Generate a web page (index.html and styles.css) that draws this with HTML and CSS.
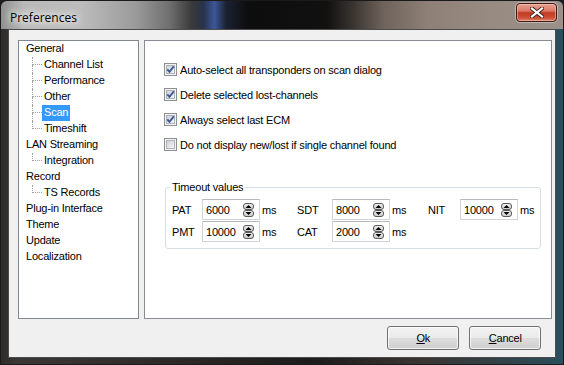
FILE: index.html
```html
<!DOCTYPE html>
<html lang="en">
<head>
<meta charset="UTF-8" />
<title>Preferences</title>
<link rel="stylesheet" href="styles.css">
</head>
<body>
  <svg class="defs" width="0" height="0" aria-hidden="true">
    <defs>
      <linearGradient id="box-fill" x1="0" y1="0" x2="1" y2="1">
        <stop offset="0" stop-color="#cbcfd5"/>
        <stop offset="1" stop-color="#f7f7f8"/>
      </linearGradient>
      <linearGradient id="spin-fill" x1="0" y1="0" x2="0" y2="1">
        <stop offset="0" stop-color="#f4f4f4"/>
        <stop offset="1" stop-color="#c8c8c8"/>
      </linearGradient>
      <symbol id="box" viewBox="0 0 13 13">
        <rect x="0.5" y="0.5" width="12" height="12" fill="#f4f4f4" stroke="#8e8f8f"/>
        <rect x="2.5" y="2.5" width="8" height="8" fill="url(#box-fill)" stroke="#aeb3b9"/>
      </symbol>
      <symbol id="tick" viewBox="0 0 13 13">
        <path d="M3.3 6.3 L5.5 8.8 L9.8 3.4" fill="none" stroke="#3a5a94" stroke-width="1.9"/>
      </symbol>
      <symbol id="spin" viewBox="0 0 11 14">
        <rect x="0.5" y="0.5" width="10" height="6" rx="2.5" fill="url(#spin-fill)" stroke="#5a5a5a"/>
        <rect x="0.5" y="7.5" width="10" height="6" rx="2.5" fill="url(#spin-fill)" stroke="#5a5a5a"/>
        <path d="M5.5 2 L8.5 5 H2.5Z" fill="#000"/>
        <path d="M5.5 12 L8.5 9 H2.5Z" fill="#000"/>
      </symbol>
    </defs>
  </svg>

  <div class="window" role="dialog" aria-label="Preferences">

    <div class="titlebar">
      <span class="title">Preferences</span>
      <button class="close" aria-label="Close">
        <svg width="14" height="11" viewBox="0 0 14 11">
          <path d="M2 1.5 L12 9.5 M12 1.5 L2 9.5" stroke="#3b2420" stroke-width="4" stroke-linecap="square"/>
          <path d="M2 1.5 L12 9.5 M12 1.5 L2 9.5" stroke="#fff" stroke-width="2.2" stroke-linecap="square"/>
        </svg>
      </button>
    </div>

    <div class="frame">
      <div class="client">
        <div class="panes">

          <ul class="tree">
            <li><span class="node">General</span>
              <ul class="sub">
                <li><span class="node">Channel List</span></li>
                <li><span class="node">Performance</span></li>
                <li><span class="node">Other</span></li>
                <li><span class="node selected">Scan</span></li>
                <li><span class="node">Timeshift</span></li>
              </ul>
            </li>
            <li><span class="node">LAN Streaming</span>
              <ul class="sub">
                <li><span class="node">Integration</span></li>
              </ul>
            </li>
            <li><span class="node">Record</span>
              <ul class="sub">
                <li><span class="node">TS Records</span></li>
              </ul>
            </li>
            <li><span class="node">Plug-in Interface</span></li>
            <li><span class="node">Theme</span></li>
            <li><span class="node">Update</span></li>
            <li><span class="node">Localization</span></li>
          </ul>

          <div class="page">
            <label class="check">
              <svg class="box"><use href="#box"/><use href="#tick"/></svg>
              Auto-select all transponders on scan dialog
            </label>
            <label class="check">
              <svg class="box"><use href="#box"/><use href="#tick"/></svg>
              Delete selected lost-channels
            </label>
            <label class="check">
              <svg class="box"><use href="#box"/><use href="#tick"/></svg>
              Always select last ECM
            </label>
            <label class="check">
              <svg class="box"><use href="#box"/></svg>
              Do not display new/lost if single channel found
            </label>

            <fieldset class="group">
              <legend>Timeout values</legend>
              <div class="timeouts">
                <span class="lbl">PAT</span>
                <span class="spin-edit"><span>6000</span><svg class="spin"><use href="#spin"/></svg></span>
                <span class="unit">ms</span>
                <span class="lbl">SDT</span>
                <span class="spin-edit"><span>8000</span><svg class="spin"><use href="#spin"/></svg></span>
                <span class="unit">ms</span>
                <span class="lbl">NIT</span>
                <span class="spin-edit"><span>10000</span><svg class="spin"><use href="#spin"/></svg></span>
                <span class="unit">ms</span>

                <span class="lbl">PMT</span>
                <span class="spin-edit"><span>10000</span><svg class="spin"><use href="#spin"/></svg></span>
                <span class="unit">ms</span>
                <span class="lbl">CAT</span>
                <span class="spin-edit"><span>2000</span><svg class="spin"><use href="#spin"/></svg></span>
                <span class="unit">ms</span>
              </div>
            </fieldset>
          </div>

        </div>

        <div class="buttons">
          <button class="btn"><u>O</u>k</button>
          <button class="btn"><u>C</u>ancel</button>
        </div>
      </div>
    </div>

  </div>
</body>
</html>
```

FILE: styles.css
```css
/* Reset & base */
*, *::before, *::after {
  box-sizing: border-box;
}
html, body {
  margin: 0;
  width: 564px;
  height: 365px;
  overflow: hidden;
  background: #1c1c1c;
  font-family: 'Liberation Sans', Arial, sans-serif;
  font-size: 11px;
  letter-spacing: -0.2px;
  color: #000;
}
.defs {
  position: absolute;
}

/* Aero window frame */
.window {
  width: 564px;
  height: 365px;
  display: flex;
  flex-direction: column;
  border: 1px solid #1a1a1a;
  border-radius: 6px 6px 0 0;
  background: linear-gradient(to right, #2e2c2a 0, #3a3836 3%, #2a2826 35%, #1c1c1c 55%, #3a3532 75%, #2d4a55 97%, #27505f 100%);
}

.titlebar {
  height: 28px;
  flex-shrink: 0;
  display: flex;
  align-items: flex-start;
  justify-content: space-between;
  padding-left: 9px;
  background: linear-gradient(to right,
    #8f8f8f 0, #b9b9b9 4%, #bdbdbd 14%, #9a9a9a 24%, #6f6f6f 30%,
    #393939 34%, #27324a 36%, #3c5699 38%, #1b2233 40%, #0d0d0d 44%,
    #111 58%, #3d3733 63%, #6e635b 68%, #8e8077 76%, #978a81 86%, #9b918a 100%);
  border-radius: 6px 6px 0 0;
}
.title {
  margin-top: 8px;
  font-family: 'Open Sans', 'Noto Sans', sans-serif;
  font-size: 12px;
  letter-spacing: 0;
  color: #000;
  text-shadow: 0 0 6px #fff, 0 0 10px rgba(255, 255, 255, 0.9), 0 0 14px rgba(255, 255, 255, 0.7);
}
.close {
  width: 41px;
  height: 19px;
  margin: 2px 6px 0 0;
  padding: 0;
  display: flex;
  align-items: center;
  justify-content: center;
  border: 1px solid #3e1a14;
  border-radius: 4px;
  background: linear-gradient(#e9a090 0%, #dc7c68 40%, #c23a22 52%, #cc4f36 80%, #e2826a 100%);
  box-shadow: inset 0 0 0 1px rgba(255, 210, 200, 0.5), 0 0 0 1px rgba(255, 255, 255, 0.35);
}

.frame {
  flex-grow: 1;
  display: flex;
  padding: 0 7px 6px 7px;
}

.client {
  flex-grow: 1;
  display: flex;
  flex-direction: column;
  padding: 10px 3px 0 9px;
  background: #f0f0f0;
  border: 1px solid #4b4b4b;
}

.panes {
  height: 279px;
  display: flex;
  gap: 5px;
}

/* Tree view */
.tree {
  width: 121px;
  margin: 0;
  padding: 0;
  list-style: none;
  background: #fff;
  border: 1px solid #828790;
  line-height: 15px;
}
.tree ul {
  margin: 0;
  padding: 0;
  list-style: none;
}
.tree li {
  height: auto;
}
.tree > li > .node {
  margin-left: 5px;
  padding: 0 2px;
}
.sub > li {
  position: relative;
}
.sub > li > .node {
  margin-left: 23px;
  padding: 0 2px;
}
.sub > li::before {
  content: '';
  position: absolute;
  left: 13px;
  top: 0;
  width: 10px;
  height: 8px;
  border-left: 1px dotted #a0a0a0;
  border-bottom: 1px dotted #a0a0a0;
}
.sub > li:not(:last-child)::after {
  content: '';
  position: absolute;
  left: 13px;
  top: 8px;
  height: 8px;
  border-left: 1px dotted #a0a0a0;
}
.node {
  display: inline-block;
  height: 16px;
  vertical-align: top;
}
.node.selected {
  background: #3399ff;
  color: #fff;
}

/* Property page */
.page {
  flex-grow: 1;
  background: #fff;
  border: 1px solid #898c95;
  padding: 16px 10px 0 19px;
}
.check {
  display: flex;
  align-items: center;
  height: 25px;
}
.box {
  width: 13px;
  height: 13px;
  margin-right: 3px;
  flex-shrink: 0;
}

.group {
  margin: 24px 0 0 1px;
  padding: 5px 6px 6px 6px;
  border: 1px solid #d5dfe5;
  border-radius: 3px;
}
.group legend {
  margin-left: -2px;
  padding: 0 2px;
  line-height: 13px;
}
.timeouts {
  display: grid;
  grid-template-columns: 30px 58px 37px 35px 58px 38px 32px 58px auto;
  grid-auto-rows: 21px;
  row-gap: 1px;
  align-items: center;
}
.spin-edit {
  height: 21px;
  display: flex;
  align-items: center;
  justify-content: space-between;
  padding: 0 5px 0 3px;
  background: #fff;
  border: 1px solid #d0d3d8;
  border-top-color: #b5b8be;
}
.spin {
  width: 11px;
  height: 14px;
}
.unit {
  padding-left: 2px;
}

/* Dialog buttons */
.buttons {
  display: flex;
  justify-content: flex-end;
  gap: 10px;
  margin: 7px 11px 0 0;
}
.btn {
  width: 72px;
  height: 24px;
  padding: 0;
  font-family: inherit;
  font-size: 11px;
  letter-spacing: inherit;
  color: #000;
  border: 1px solid #707070;
  border-radius: 3px;
  background: linear-gradient(#f2f2f2 0%, #ebebeb 48%, #dddddd 52%, #cfcfcf 100%);
  box-shadow: inset 0 0 0 1px rgba(255, 255, 255, 0.75);
}
```
